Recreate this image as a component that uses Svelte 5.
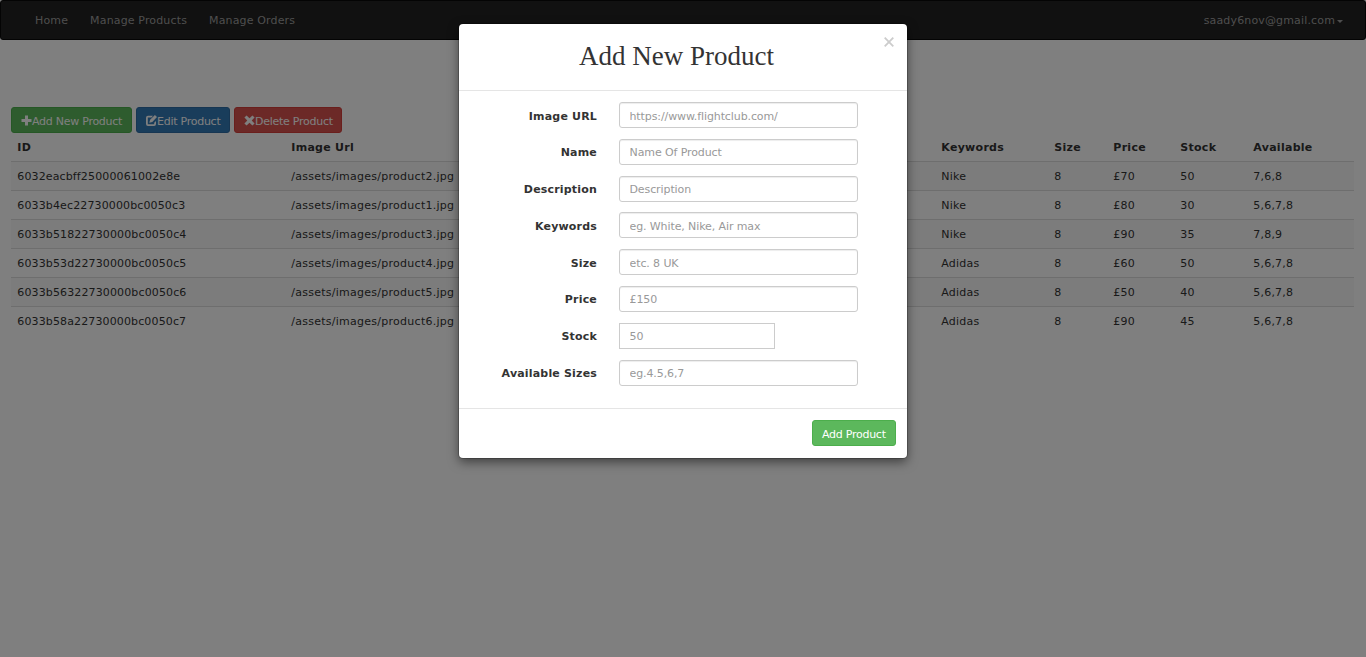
<script>
  const rows = [
    ['6032eacbff25000061002e8e', '/assets/images/product2.jpg', 'Nike', '8', '£70', '50', '7,6,8'],
    ['6033b4ec22730000bc0050c3', '/assets/images/product1.jpg', 'Nike', '8', '£80', '30', '5,6,7,8'],
    ['6033b51822730000bc0050c4', '/assets/images/product3.jpg', 'Nike', '8', '£90', '35', '7,8,9'],
    ['6033b53d22730000bc0050c5', '/assets/images/product4.jpg', 'Adidas', '8', '£60', '50', '5,6,7,8'],
    ['6033b56322730000bc0050c6', '/assets/images/product5.jpg', 'Adidas', '8', '£50', '40', '5,6,7,8'],
    ['6033b58a22730000bc0050c7', '/assets/images/product6.jpg', 'Adidas', '8', '£90', '45', '5,6,7,8']
  ];
  const heads = ['ID', 'Image Url', 'Keywords', 'Size', 'Price', 'Stock', 'Available'];
  const fields = [
    ['Image URL', 'https://www.flightclub.com/'],
    ['Name', 'Name Of Product'],
    ['Description', 'Description'],
    ['Keywords', 'eg. White, Nike, Air max'],
    ['Size', 'etc. 8 UK'],
    ['Price', '£150'],
    ['Stock', '50'],
    ['Available Sizes', 'eg.4.5,6,7']
  ];
</script>

<div class="page">
  <nav>
    <a href="#home">Home</a>
    <a href="#products">Manage Products</a>
    <a href="#orders">Manage Orders</a>
    <a class="user" href="#account">saady6nov@gmail.com<i class="caret"></i></a>
  </nav>

  <main>
    <div class="actions">
      <button class="btn green"><svg width="11" height="11" viewBox="0 0 11 11"><path d="M4 .5h3V4h3.500v3H7v3.500H4V7H.5V4H4z" /></svg>Add New Product</button>
      <button class="btn blue"><svg width="11" height="11" viewBox="0 0 11 11"><path d="M7 .8H2A2 2 0 0 0 0 2.800V9a2 2 0 0 0 2 2h6a2 2 0 0 0 2-2V6L8.200 7.800V9.200H1.800V2.600h3.600zM8.900 0 11 2.100 6.300 7 3.300 7.800 4.100 4.800z" /></svg>Edit Product</button>
      <button class="btn red"><svg width="11" height="11" viewBox="0 0 11 11"><path d="M2.600.4 5.500 3.300 8.400.4l2.200 2.200L7.700 5.500l2.900 2.900-2.200 2.200L5.500 7.700l-2.900 2.900L.4 8.400 3.300 5.500.4 2.600z" /></svg>Delete Product</button>
    </div>
    <table>
      <colgroup>
        <col style="width:274px" /><col style="width:650px" /><col style="width:113px" /><col style="width:59px" /><col style="width:67px" /><col style="width:73px" /><col />
      </colgroup>
      <thead><tr>{#each heads as h}<th>{h}</th>{/each}</tr></thead>
      <tbody>
        {#each rows as row}<tr>{#each row as cell}<td>{cell}</td>{/each}</tr>{/each}
      </tbody>
    </table>
  </main>
</div>

<div class="backdrop">
  <div class="modal">
    <header>
      <h2>Add New Product</h2>
      <button class="close" aria-label="Close"><svg width="10" height="10" viewBox="0 0 10 10"><path d="M.7.7l8.600 8.600M9.300.7.7 9.300" /></svg></button>
    </header>
    <form>
      {#each fields as [label, hint]}
        <label><span>{label}</span><input class:short={label === 'Stock'} placeholder={hint} /></label>
      {/each}
    </form>
    <footer><button class="btn green">Add Product</button></footer>
  </div>
</div>

<style>
  :global(body) { background: #fff; overflow: hidden; }
  * { box-sizing: border-box; }
  .page, .backdrop { font: 11px/15px Verdana, "DejaVu Sans", sans-serif; color: #333; }
  .page { height: 657px; letter-spacing: 0.2px; }
  nav { height: 40px; display: flex; align-items: center; gap: 22px; padding: 0 22px 0 34px; background: #222; border: 1px solid #080808; border-radius: 3px; letter-spacing: 0.15px; }
  nav a { color: #9d9d9d; text-decoration: none; white-space: nowrap; }
  .user { margin-left: auto; display: flex; align-items: center; gap: 2px; }
  .caret { border: 3px solid transparent; border-top-color: #9d9d9d; border-bottom: 0; margin-top: 2px; }
  main { padding: 67px 12px 0 11px; }
  .actions { display: flex; gap: 4px; height: 26px; }
  .btn { height: 26px; display: flex; align-items: center; padding: 2px 9px 0; border: 1px solid; border-radius: 3px; color: #fff; font: 11px/15px Verdana, "DejaVu Sans", sans-serif; letter-spacing: -0.26px; white-space: nowrap; }
  .btn svg { fill: #fff; flex: none; margin-top: -2px; }
  .green { background: #5cb85c; border-color: #4cae4c; width: 121px; }
  .blue { background: #337ab7; border-color: #2e6da4; width: 94px; }
  .red { background: #d9534f; border-color: #d43f3a; width: 108px; }
  footer .btn { width: 84px; }
  table { width: 1343px; table-layout: fixed; border-collapse: collapse; }
  th, td { height: 29px; padding: 1px 6px 0 6.300px; text-align: left; white-space: nowrap; }
  th { height: 28px; letter-spacing: 0.28px; }
  td { border-top: 1px solid #ddd; }
  td:first-child { letter-spacing: 0.13px; }
  td:nth-child(2) { letter-spacing: 0.26px; }
  tbody tr:nth-child(odd) { background: #f9f9f9; }
  .backdrop { position: absolute; inset: 0; height: 657px; background: rgba(0, 0, 0, 0.5); padding-top: 24px; }
  .modal { width: 448px; height: 434px; margin: 0 auto; background: #fff; border-radius: 4px; box-shadow: 0 4px 11px rgba(0, 0, 0, 0.5), 0 0 0 1px rgba(0, 0, 0, 0.2); display: flex; flex-direction: column; }
  header { height: 67px; border-bottom: 1px solid #e5e5e5; display: grid; grid-template-columns: 1fr 31px; }
  h2 { margin: 0; padding: 17px 0 0 18px; text-align: center; font: 400 27px/30px "Liberation Serif", serif; }
  .close { border: 0; background: none; padding: 13px 0 0 8px; display: flex; align-items: flex-start; }
  .close path { stroke: #ccc; stroke-width: 1.800; }
  form { flex: 1; padding-top: 11px; }
  label { height: 36.800px; display: flex; align-items: flex-start; gap: 22px; font-weight: 700; letter-spacing: 0.18px; }
  label span { width: 138px; text-align: right; padding-top: 6.500px; }
  input { width: 239px; height: 26px; border: 1px solid #ccc; border-radius: 3px; padding: 2px 9.500px 0; font: 11px Verdana, "DejaVu Sans", sans-serif; letter-spacing: -0.1px; box-shadow: inset 0 1px 1px rgba(0, 0, 0, 0.075); }
  input::placeholder { color: #999; opacity: 1; }
  .short { width: 156px; border-radius: 0; box-shadow: none; }
  footer { height: 50px; border-top: 1px solid #e5e5e5; display: flex; justify-content: flex-end; padding: 11px 11px 0 0; }
</style>
